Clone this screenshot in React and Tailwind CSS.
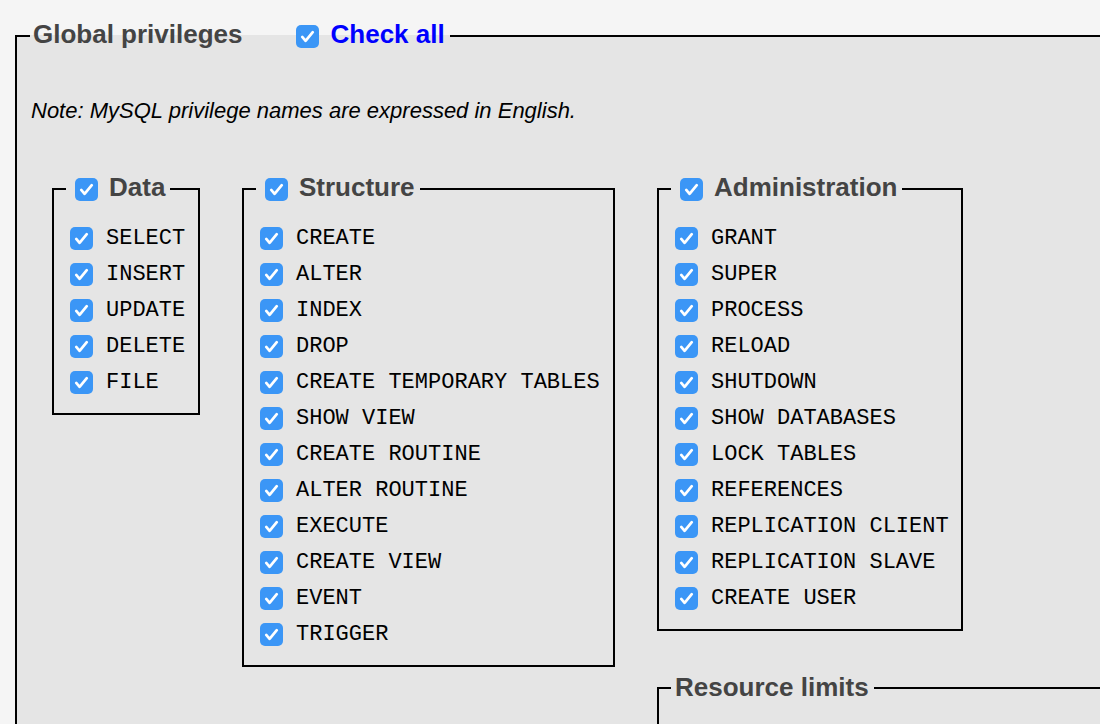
const data = ["SELECT", "INSERT", "UPDATE", "DELETE", "FILE"];
const structure = [
  "CREATE",
  "ALTER",
  "INDEX",
  "DROP",
  "CREATE TEMPORARY TABLES",
  "SHOW VIEW",
  "CREATE ROUTINE",
  "ALTER ROUTINE",
  "EXECUTE",
  "CREATE VIEW",
  "EVENT",
  "TRIGGER",
];
const admin = [
  "GRANT",
  "SUPER",
  "PROCESS",
  "RELOAD",
  "SHUTDOWN",
  "SHOW DATABASES",
  "LOCK TABLES",
  "REFERENCES",
  "REPLICATION CLIENT",
  "REPLICATION SLAVE",
  "CREATE USER",
];

function Check({ className = "" }) {
  return (
    <span
      className={`flex h-[23px] w-[23px] shrink-0 items-center justify-center rounded-[5px] bg-[#3b96f6] ${className}`}
    >
      <svg viewBox="0 0 24 24" className="h-[23px] w-[23px]" fill="none">
        <path
          d="M6.5 12.5 L10 16.5 L17.5 7.5"
          stroke="white"
          strokeWidth="2.8"
          strokeLinecap="round"
          strokeLinejoin="round"
        />
      </svg>
    </span>
  );
}

function Group({ title, items, width }) {
  return (
    <fieldset className={`${width} shrink-0 border-2 border-black pl-[12px] pb-[13px]`}>
      <legend>
        <div className="flex items-center pr-[5px]">
          <Check className="ml-[9px]" />
          <span className="ml-[11px] pb-[4px] text-[26px] font-bold leading-[28px] text-[#444]">
            {title}
          </span>
        </div>
      </legend>
      <div className="pt-[15px]">
        {items.map((item) => (
          <div key={item} className="flex h-[36px] items-center">
            <Check className="ml-[4px]" />
            <span className="ml-[13px] whitespace-pre font-['Liberation_Mono',monospace] text-[22px] text-black">
              {item}
            </span>
          </div>
        ))}
      </div>
    </fieldset>
  );
}

export default function App() {
  return (
    <div className="h-[724px] w-[1100px] overflow-hidden bg-[#f5f5f5] pt-[20px] font-['Liberation_Sans',Arial,sans-serif]">
      <fieldset className="ml-[15px] h-[900px] w-[1200px] border-2 border-black bg-[#e5e5e5] pl-[13px]">
        <legend>
          <div className="flex items-center pl-[3px] pr-[5px]">
            <span className="pb-[4px] text-[26px] font-bold leading-[28px] text-[#444]">
              Global privileges
            </span>
            <Check className="ml-[53px]" />
            <span className="ml-[12px] pb-[4px] text-[26px] font-bold leading-[28px] text-[#0000ff]">
              Check all
            </span>
          </div>
        </legend>

        <p className="ml-[1px] mt-[42px] text-[22px] italic text-black">
          Note: MySQL privilege names are expressed in English.
        </p>

        <div className="ml-[22px] mt-[46px] flex items-start gap-[42px]">
          <Group title="Data" items={data} width="w-[148px]" />
          <Group title="Structure" items={structure} width="w-[373px]" />
          <div className="flex flex-col">
            <Group title="Administration" items={admin} width="w-[306px]" />
            <fieldset className="mt-[37px] h-[140px] w-[500px] border-2 border-black pl-[12px]">
              <legend className="pl-[4px] pr-[5px] text-[26px] font-bold text-[#444]">
                Resource limits
              </legend>
            </fieldset>
          </div>
        </div>
      </fieldset>
    </div>
  );
}
